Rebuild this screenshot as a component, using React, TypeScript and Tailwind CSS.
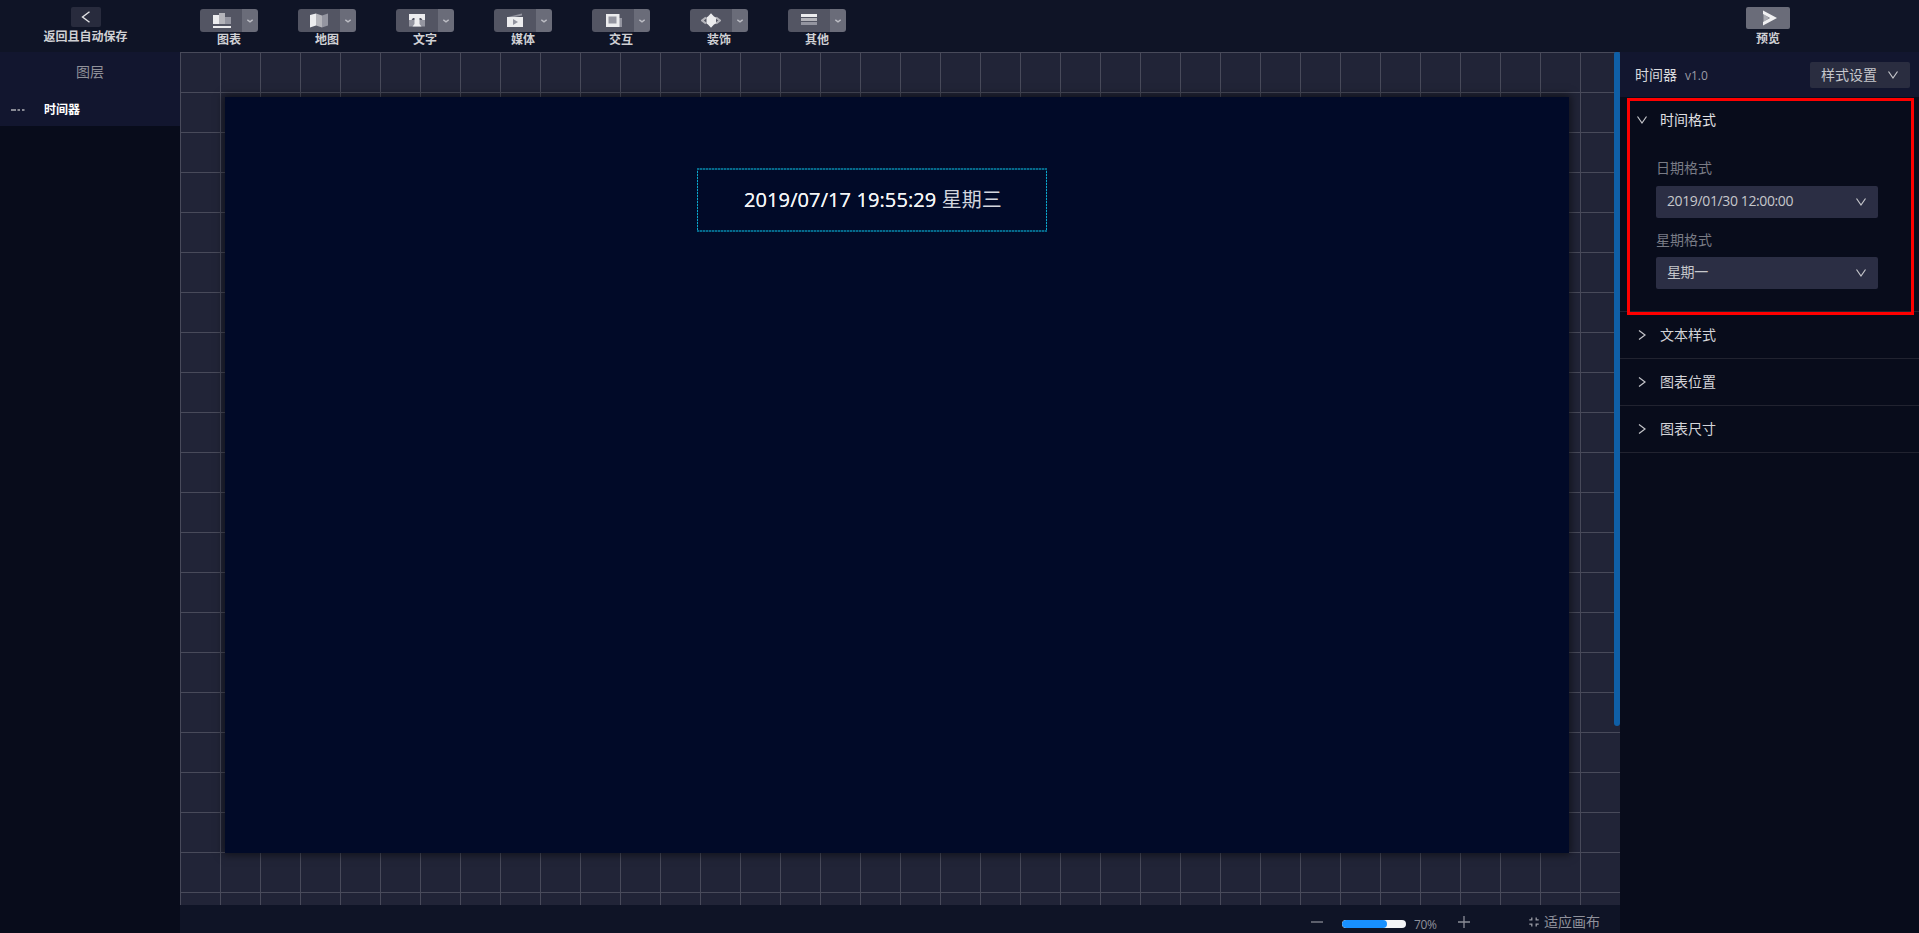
import type { ReactNode } from 'react';

const LIGHT = '#ececee';
const MID = '#b4b4ba';
const DIM = '#9495a0';

function ChartIcon() {
  return (
    <svg className="ml-0.5" width="18" height="16" viewBox="0 0 18 16" shapeRendering="crispEdges">
      <rect x="0" y="2" width="6" height="9" fill={LIGHT} />
      <rect x="6" y="0" width="6" height="11" fill={MID} />
      <rect x="12" y="4" width="6" height="7" fill={DIM} />
      <rect x="0" y="13" width="18" height="2" fill={LIGHT} />
    </svg>
  );
}

function MapIcon() {
  return (
    <svg width="18" height="16" viewBox="0 0 18 16">
      <path d="M0 2 6 0.5V12.5L0 14.5Z" fill={LIGHT} />
      <path d="M6 0.5 12 2.5V14.5L6 12.5Z" fill={MID} />
      <path d="M12 2.5 18 0.5V12.5L12 14.5Z" fill={DIM} />
    </svg>
  );
}

function TextIcon() {
  return (
    <svg width="16" height="16" viewBox="0 0 16 16">
      <path d="M0 7H16V13.5H0Z" fill={DIM} />
      <path d="M0 1H16V7H13.5L12 5H10.5V11L12.5 13.5H3.5L5.5 11V5H4L2.5 7H0Z" fill={LIGHT} />
    </svg>
  );
}

function MediaIcon() {
  return (
    <svg width="16" height="16" viewBox="0 0 16 16">
      <path d="M1 4 15 0.5V2.5L5 4.5H1Z" fill={DIM} />
      <rect x="0" y="4" width="16" height="10" fill={LIGHT} />
      <path d="M6 6V12L11 9Z" fill={DIM} />
    </svg>
  );
}

function InteractIcon() {
  return (
    <svg className="ml-0.5" width="16" height="16" viewBox="0 0 16 16">
      <path d="M5 5H16V14H5Z" fill={DIM} />
      <rect x="0" y="1" width="13.5" height="13" fill={LIGHT} />
      <rect x="2.5" y="3.5" width="8" height="7" fill={DIM} />
    </svg>
  );
}

function DecorIcon() {
  return (
    <svg width="20" height="16" viewBox="0 0 20 16">
      <path d="M5 4.5 1.2 7.5 5 10.5M15 4.5 18.8 7.5 15 10.5" stroke={MID} strokeWidth="2.2" fill="none" />
      <path d="M10 0.2 13 3.5 15 4.5V10.5L13 11.5 10 14.8 7 11.5 5.5 10.5V4.5L7 3.5Z" fill={LIGHT} />
    </svg>
  );
}

function OtherIcon() {
  return (
    <svg width="16" height="16" viewBox="0 0 16 16" shapeRendering="crispEdges">
      <rect y="1" width="16" height="3" fill={LIGHT} />
      <rect y="5" width="16" height="3" fill={MID} />
      <rect y="9" width="16" height="3" fill={DIM} />
    </svg>
  );
}

const tools: { label: string; icon: ReactNode }[] = [
  { label: '图表', icon: <ChartIcon /> },
  { label: '地图', icon: <MapIcon /> },
  { label: '文字', icon: <TextIcon /> },
  { label: '媒体', icon: <MediaIcon /> },
  { label: '交互', icon: <InteractIcon /> },
  { label: '装饰', icon: <DecorIcon /> },
  { label: '其他', icon: <OtherIcon /> },
];

function Chevron({ open = true }: { open?: boolean }) {
  return (
    <svg width="12" height="12" viewBox="0 0 12 12" fill="none" stroke="#c4c5ca" strokeWidth="1.2">
      {open ? <path d="M1.5 2.5 6 9 10.5 2.5" /> : <path d="M3 1.5 9 6 3 10.5" />}
    </svg>
  );
}

function ToolButton({ label, icon }: { label: string; icon: ReactNode }) {
  return (
    <div className="flex w-[58px] flex-col items-center">
      <div className="flex h-[23px] w-[58px] overflow-hidden rounded-[3px]">
        <div className="flex w-[42px] items-center justify-center bg-[#535563] pt-px">{icon}</div>
        <div className="flex w-4 items-center justify-center bg-[#6a6c79]">
          <svg width="6" height="4" viewBox="0 0 6 4" fill="none" stroke="#bcbdc4" strokeWidth="1.4">
            <path d="M0.3 0.8 3 2.8 5.7 0.8" />
          </svg>
        </div>
      </div>
      <span className="h-4 text-xs leading-4 font-bold text-[#cfd0d4]">{label}</span>
    </div>
  );
}

function Select({ value }: { value: string }) {
  return (
    <div className="flex h-8 w-[222px] items-center justify-between rounded-[2px] bg-[#2b2e44] pr-[11px] pl-[11px] text-sm text-[#c6c7cb]">
      <span className="-mt-0.5 tracking-[-0.38px]">{value}</span>
      <Chevron />
    </div>
  );
}

function Section({ title }: { title: string }) {
  return (
    <div className="flex h-[47px] items-center gap-3 border-b border-[#212330] pl-4 text-sm text-[#d3d4d8]">
      <Chevron open={false} />
      <span>{title}</span>
    </div>
  );
}

export default function App() {
  return (
    <div className="flex h-[933px] w-[1919px] flex-col overflow-hidden bg-[#080c1b] font-['Open_Sans','Noto_Sans_CJK_SC',sans-serif]">
      <header className="flex h-[52px] shrink-0 bg-[#0f1426]">
        <div className="flex w-[180px] flex-col items-center pt-[7px] pr-[9px]">
          <div className="flex h-5 w-[30px] items-center justify-center rounded-[2px] bg-[#282b3d]">
            <svg width="10" height="12" viewBox="0 0 10 12" fill="none" stroke="#e2e2e5" strokeWidth="1.4">
              <path d="M8.5 0.7 1.5 6 8.5 11.3" />
            </svg>
          </div>
          <span className="mt-0.5 text-xs leading-4 font-bold text-[#cfd0d4]">返回且自动保存</span>
        </div>
        <div className="flex w-[1440px] gap-10 pt-[9px] pl-5">
          {tools.map((t) => (
            <ToolButton key={t.label} label={t.label} icon={t.icon} />
          ))}
        </div>
        <div className="flex flex-1 flex-col items-center pt-[7px] pr-[3px]">
          <div className="flex h-[22px] w-11 items-center justify-center rounded-[2px] bg-[#6a6c79] pl-1">
            <svg width="14" height="16" viewBox="0 0 14 16">
              <path d="M0.5 4V12L6 8Z" fill="#a9aab2" />
              <path d="M0 0.5 14 8 0 15.5V12L7 8 0 4Z" fill="#f0f0f2" />
            </svg>
          </div>
          <span className="mt-0.5 text-xs leading-4 font-bold text-[#cfd0d4]">预览</span>
        </div>
      </header>

      <div className="flex min-h-0 flex-1">
        <aside className="w-[180px] shrink-0">
          <div className="h-[74px] bg-[#12162f]">
            <div className="flex h-10 items-center justify-center text-sm text-[#909199]">图层</div>
            <div className="flex h-[34px] items-center gap-[19px] pt-0.5 pl-[11px]">
              <svg width="14" height="4" viewBox="0 0 14 4" fill="#878994">
                <rect y="1" width="5" height="2" />
                <rect x="6.5" y="1" width="2.5" height="2" />
                <rect x="11" y="1" width="2.5" height="2" />
              </svg>
              <span className="text-xs font-bold text-white">时间器</span>
            </div>
          </div>
        </aside>

        <main className="flex w-[1440px] shrink-0 flex-col">
          <div className="flex h-[853px] justify-between bg-[#212437] bg-[linear-gradient(#484a5a_1px,transparent_1px),linear-gradient(90deg,#484a5a_1px,transparent_1px)] bg-[size:40px_40px]">
            <div className="mt-[45px] ml-[45px] h-[756px] w-[1344px] bg-[#010a28] pt-[71px] pl-[472px] shadow-[0_0_8px_2px_rgba(0,0,0,0.5)]">
              <div className="flex h-16 w-[350px] items-center justify-center bg-[linear-gradient(90deg,#05698c_2px,#033450_2px),linear-gradient(90deg,#05698c_2px,#033450_2px),linear-gradient(#0aa5cc_2px,#033450_2px),linear-gradient(#0aa5cc_2px,#033450_2px)] bg-[size:3px_2px,3px_2px,1px_3px,1px_3px] bg-[position:left_top,left_bottom,left_top,right_top] [background-repeat:repeat-x,repeat-x,repeat-y,repeat-y] pl-0.5 text-[20px] whitespace-pre text-[#f2f3f5]">
                <span className="tracking-[0.1px] [text-shadow:0_0_0.5px_#fff]">
                  2019/07/17 19:55:29 <span className="text-[#d3d6de] [text-shadow:none]">星期三</span>
                </span>
              </div>
            </div>
            <div className="h-[674px] w-1.5 rounded-t-[2px] rounded-b-[3px] bg-[#0f5fa6]" />
          </div>
          <footer className="flex h-7 items-center bg-[#0f1426] pt-1.5 pl-[1131px] text-[#8f919b]">
            <svg width="12" height="12" viewBox="0 0 12 12" stroke="#777984" strokeWidth="1.5">
              <path d="M0 6H12" />
            </svg>
            <div className="mt-1 ml-[19px] flex h-2 w-16 overflow-hidden rounded-full bg-[#f4f5f7]">
              <div className="w-[45px] rounded-full bg-[#1890ff]" />
            </div>
            <span className="mt-1.5 ml-2 w-[22px] text-xs tracking-[-0.4px]">70%</span>
            <svg className="ml-[22px]" width="12" height="12" viewBox="0 0 12 12" stroke="#8b8d97" strokeWidth="1.3">
              <path d="M0 6H12M6 0V12" />
            </svg>
            <svg className="ml-[59px]" width="10" height="10" viewBox="0 0 10 10" fill="none" stroke="#9a9ca5" strokeWidth="1.3">
              <path d="M2.8 0.5V2.8H0.3M7.2 0.5V2.8H9.7M2.8 9.5V7.2H0.3M7.2 9.5V7.2H9.7" />
            </svg>
            <span className="ml-[5px] text-sm">适应画布</span>
          </footer>
        </main>

        <aside className="relative flex-1">
          <div className="flex h-[45px] items-center bg-[#12162f] pr-[9px] pl-[15px]">
            <span className="text-sm text-[#d8d9dd]">时间器</span>
            <span className="mt-0.5 ml-2 text-xs text-[#9b9ca6]">v1.0</span>
            <div className="ml-auto flex h-[26px] w-[100px] items-center justify-between rounded-[2px] bg-[#2a2d40] pr-[11px] pl-[11px] text-sm text-[#c6c7cb]">
              <span>样式设置</span>
              <Chevron />
            </div>
          </div>
          <div className="h-[215px] border-b border-[#212330]">
            <div className="flex h-[46px] items-center gap-3 pl-4 text-sm text-[#e0e0e3]">
              <Chevron />
              <span>时间格式</span>
            </div>
            <div className="pt-[15px] pl-9 text-sm leading-5 text-[#797b85]">
              <div className="mb-2 h-5">日期格式</div>
              <Select value="2019/01/30 12:00:00" />
              <div className="mt-3 mb-[7px] h-5">星期格式</div>
              <Select value="星期一" />
            </div>
          </div>
          <Section title="文本样式" />
          <Section title="图表位置" />
          <Section title="图表尺寸" />
          <div className="pointer-events-none absolute top-[46px] left-[7px] h-[217px] w-[287px] border-3 border-[#ff0000]" />
        </aside>
      </div>
    </div>
  );
}
